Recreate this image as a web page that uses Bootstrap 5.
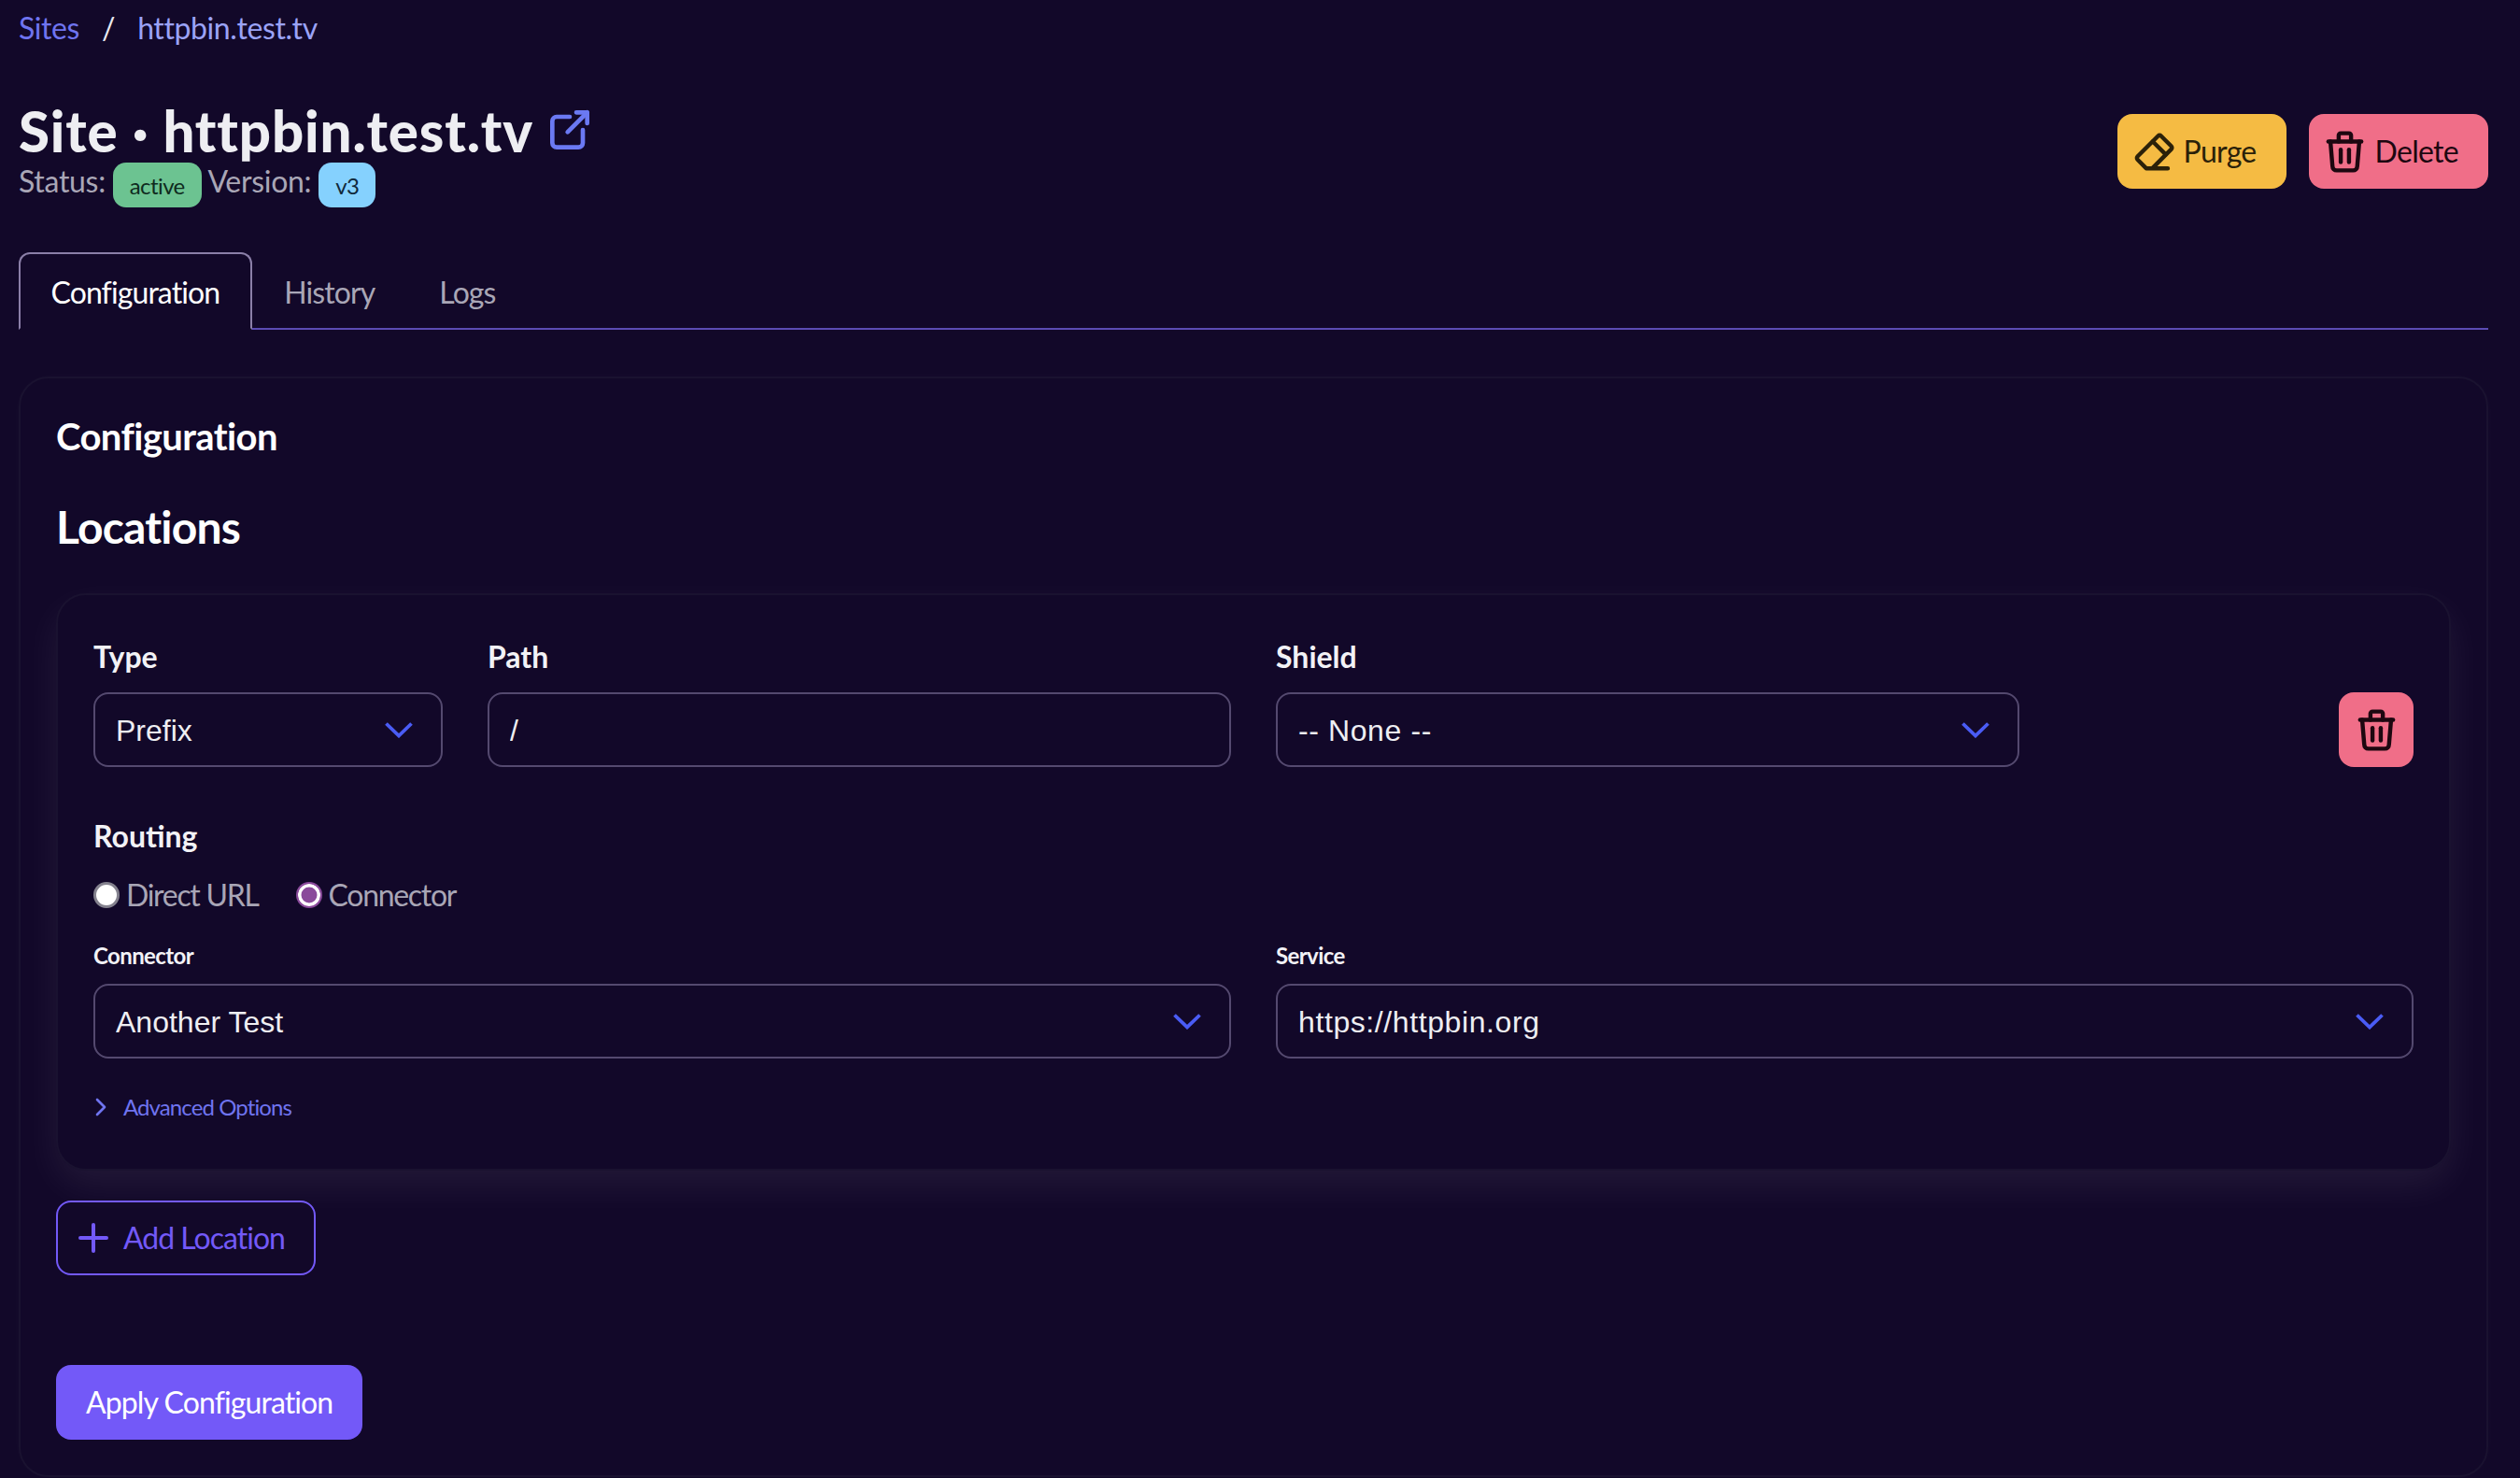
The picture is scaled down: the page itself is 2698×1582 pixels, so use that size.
<!DOCTYPE html>
<html lang="en" data-bs-theme="dark">
<head>
    <meta charset="utf-8">
    <title>Site - httpbin.test.tv</title>
    <link href="https://cdn.jsdelivr.net/npm/bootstrap@5.3.0/dist/css/bootstrap.min.css" rel="stylesheet">
    <style>
        html { font-size: 32px; }
        body {
            background: #120829; color: #eeeef2;
            font-family: "Lato", "Liberation Sans", sans-serif;
            --bs-border-width: 2px;
            line-height: 1.5;
            letter-spacing: -0.9px;
            overflow: hidden;
        }
        .page-wrap { padding: 6px 34px 0 20px; }
        a { text-decoration: none; }
        .crumbs { --bs-breadcrumb-margin-bottom: 0; --bs-breadcrumb-item-padding-x: 24px; --bs-breadcrumb-divider-color: #e8e8f0; --bs-breadcrumb-item-active-color: #9ba3f7; letter-spacing: -0.4px; }
        .crumbs a { color: #6f74f0; }
        .page-head { margin-top: 50px; height: 116px; }
        .site-title { font-size: 60px; font-weight: 900; line-height: 72px; margin: 0; color: #eeeef2; letter-spacing: .85px; }
        .site-title svg { width: 56px; height: 56px; margin-left: -3px; vertical-align: -4px; color: #6b79f3; }
        .status-row { color: #a9a6b6; line-height: 42px; margin-top: -3px; letter-spacing: -0.3px; }
        .state-pill { display: inline-block; height: 48px; line-height: 50px; padding: 0 18px; border-radius: 14px; font-size: 24px; color: #0f2b1e; font-weight: 400; vertical-align: -2px; letter-spacing: -0.6px; }
        .pill-green { background: #6cc391; }
        .pill-blue { background: #85d1fe; color: #10283a; }
        .head-actions { gap: 24px; padding-top: 18px; }
        .head-btn { height: 80px; border-radius: 16px; border: 0; padding: 0 32px 0 12px; display: flex; align-items: center; gap: 6px; font-size: 32px; letter-spacing: -0.7px; }
        .head-btn svg, .trash-btn svg { width: 53px; height: 53px; }
        .btn-purge { background: #f5bb43; color: #2b2109; }
        .btn-purge:hover { background: #f5bb43; color: #2b2109; }
        .btn-remove { background: #f06e88; color: #1d0710; }
        .btn-remove:hover { background: #f06e88; color: #1d0710; }
        .tabs-bar { margin-top: 50px; --bs-nav-tabs-border-color: #5b4bb3; --bs-nav-tabs-border-width: 2px; --bs-nav-tabs-border-radius: 12px; }
        .tabs-bar .nav-link { height: 83px; padding: 0 32.5px; line-height: 81px; color: #a9a6b6; border: 2px solid transparent; }
        .tabs-bar .nav-link.active { background: #120829; color: #fff; border-color: #8b7fa8 #8b7fa8 #120829; }
        .outer-panel { --bs-card-bg: #120829; --bs-card-border-color: #1a1230; --bs-card-border-radius: 32px; --bs-card-inner-border-radius: 30px; margin-top: 50px; height: 1178px; padding: 38px; box-shadow: 0 0 24px rgba(255,255,255,.02); }
        .panel-title { font-size: 40px; font-weight: 700; line-height: 48px; margin: 0; letter-spacing: -0.6px; }
        .panel-sub { font-size: 48px; font-weight: 700; line-height: 58px; margin: 44px 0 42px; letter-spacing: -0.8px; }
        .location-box { --bs-card-bg: #120829; --bs-card-border-color: #1a1230; --bs-card-border-radius: 32px; height: 618px; padding: 38px; box-shadow: 0 16px 40px rgba(255,255,255,.07); }
        .field-label { font-weight: 700; font-size: 32px; line-height: 48px; margin: 4px 0 14px; display: block; color: #f2f2f6; letter-spacing: 0; }
        .field-label-sm { font-size: 24px; font-weight: 700; line-height: 36px; margin: 0 0 12px; display: block; color: #f2f2f6; letter-spacing: -0.6px; }
        .form-select, .form-control {
            height: 80px; border-radius: 16px; background-color: transparent; border: 2px solid #54496f; letter-spacing: 0;
            color: #eeeef2; font-family: "Liberation Sans", sans-serif; font-size: 32px; padding: 2px 70px 0 22px;
        }
        .form-select {
            background-image: url("data:image/svg+xml,%3csvg xmlns='http://www.w3.org/2000/svg' viewBox='0 0 30 17'%3e%3cpath fill='none' stroke='%234a5cf5' stroke-width='3.8' d='M1.5 1.5 15 14.5 28.5 1.5'/%3e%3c/svg%3e");
            background-size: 30px 17px; background-position: right 30px center;
        }
        .wide-value { letter-spacing: .6px; }
        .trash-btn { width: 80px; height: 80px; border-radius: 16px; padding: 0; border: 0; display: flex; align-items: center; justify-content: center; }
        .route-title { font-weight: 700; line-height: 48px; margin: 50px 0 0; color: #f2f2f6; letter-spacing: 0; }
        .route-options { margin: 15px 0 23px; height: 48px; color: #a9a6b6; display: flex; align-items: center; gap: 40px; letter-spacing: -1.3px; }
        .route-options .form-check { margin: 0; padding: 0; min-height: 0; display: flex; align-items: center; gap: 7px; }
        .route-options .form-check-input { float: none; margin: 0; width: 28px; height: 28px; background-color: #fff; border: 3px solid #84828e; }
        .route-options .form-check-input:checked { background-color: #8a4a9b; background-image: none; border: 2.5px solid #8a4a9b; box-shadow: inset 0 0 0 3.5px #fff; }
        .adv-toggle { margin-top: 34px; display: flex; align-items: center; gap: 10px; font-size: 24px; color: #6f74f0; line-height: 36px; letter-spacing: -.9px; }
        .adv-toggle svg { width: 32px; height: 32px; margin-left: -8px; margin-right: -2px; }
        .add-btn { margin-top: 32px; height: 80px; display: inline-flex; align-items: center; gap: 8px; padding: 0 31px 0 14px; border: 2px solid #7359f8; border-radius: 16px; color: #7359f8; background: transparent; font-size: 32px; letter-spacing: -1px; }
        .add-btn svg { width: 48px; height: 48px; }
        .apply-btn { display: block; margin-top: 96px; height: 80px; padding: 0 32px; background: #7359f8; border: 0; border-radius: 16px; font-size: 32px; color: #fff; letter-spacing: -0.9px; }
        .apply-btn:hover { background: #7359f8; color: #fff; }
    </style>
</head>
<body>
<div class="page-wrap">
    <nav aria-label="breadcrumb">
        <ol class="breadcrumb crumbs">
            <li class="breadcrumb-item"><a href="#">Sites</a></li>
            <li class="breadcrumb-item active" aria-current="page">httpbin.test.tv</li>
        </ol>
    </nav>

    <div class="page-head d-flex justify-content-between align-items-start">
        <div>
            <h1 class="site-title">Site · httpbin.test.tv
                <svg viewBox="0 0 24 24" fill="none" stroke="currentColor" stroke-width="2" stroke-linecap="round" stroke-linejoin="round"><path d="M12 6h-6a2 2 0 0 0 -2 2v10a2 2 0 0 0 2 2h10a2 2 0 0 0 2 -2v-6"/><path d="M11 13l9 -9"/><path d="M15 4h5v5"/></svg>
            </h1>
            <div class="status-row">Status: <span class="state-pill pill-green">active</span> Version: <span class="state-pill pill-blue">v3</span></div>
        </div>
        <div class="d-flex head-actions">
            <button type="button" class="btn head-btn btn-purge">
                <svg viewBox="0 0 24 24" fill="none" stroke="currentColor" stroke-width="2" stroke-linecap="round" stroke-linejoin="round"><path d="M19 20h-10.5l-4.21 -4.3a1 1 0 0 1 0 -1.41l10 -10a1 1 0 0 1 1.41 0l5 5a1 1 0 0 1 0 1.41l-9.2 9.3"/><path d="M18 13.3l-6.3 -6.3"/></svg>
                Purge
            </button>
            <button type="button" class="btn head-btn btn-remove">
                <svg viewBox="0 0 24 24" fill="none" stroke="currentColor" stroke-width="2" stroke-linecap="round" stroke-linejoin="round"><path d="M4 7l16 0"/><path d="M10 11l0 6"/><path d="M14 11l0 6"/><path d="M5 7l1 12a2 2 0 0 0 2 2h8a2 2 0 0 0 2 -2l1 -12"/><path d="M9 7v-3a1 1 0 0 1 1 -1h4a1 1 0 0 1 1 1v3"/></svg>
                Delete
            </button>
        </div>
    </div>

    <ul class="nav nav-tabs tabs-bar">
        <li class="nav-item"><a class="nav-link active" href="#">Configuration</a></li>
        <li class="nav-item"><a class="nav-link" href="#">History</a></li>
        <li class="nav-item"><a class="nav-link" href="#">Logs</a></li>
    </ul>

    <div class="card outer-panel">
        <h3 class="panel-title">Configuration</h3>
        <h2 class="panel-sub">Locations</h2>

        <div class="card location-box">
            <div class="row">
                <div class="col-2">
                    <label class="field-label">Type</label>
                    <select class="form-select"><option>Prefix</option></select>
                </div>
                <div class="col-4">
                    <label class="field-label">Path</label>
                    <input type="text" class="form-control" value="/">
                </div>
                <div class="col-4">
                    <label class="field-label">Shield</label>
                    <select class="form-select wide-value"><option>-- None --</option></select>
                </div>
                <div class="col-2 d-flex justify-content-end align-items-end">
                    <button type="button" class="btn btn-remove trash-btn">
                        <svg viewBox="0 0 24 24" fill="none" stroke="currentColor" stroke-width="2" stroke-linecap="round" stroke-linejoin="round"><path d="M4 7l16 0"/><path d="M10 11l0 6"/><path d="M14 11l0 6"/><path d="M5 7l1 12a2 2 0 0 0 2 2h8a2 2 0 0 0 2 -2l1 -12"/><path d="M9 7v-3a1 1 0 0 1 1 -1h4a1 1 0 0 1 1 1v3"/></svg>
                    </button>
                </div>
            </div>

            <p class="route-title">Routing</p>
            <div class="route-options">
                <div class="form-check">
                    <input class="form-check-input" type="radio" name="routing" id="routeDirect">
                    <label class="form-check-label" for="routeDirect">Direct URL</label>
                </div>
                <div class="form-check">
                    <input class="form-check-input" type="radio" name="routing" id="routeConnector" checked>
                    <label class="form-check-label" for="routeConnector">Connector</label>
                </div>
            </div>

            <div class="row">
                <div class="col-6">
                    <label class="field-label-sm">Connector</label>
                    <select class="form-select"><option>Another Test</option></select>
                </div>
                <div class="col-6">
                    <label class="field-label-sm">Service</label>
                    <select class="form-select wide-value"><option>https://httpbin.org</option></select>
                </div>
            </div>

            <a href="#" class="adv-toggle">
                <svg viewBox="0 0 24 24" fill="none" stroke="currentColor" stroke-width="2" stroke-linecap="round" stroke-linejoin="round"><path d="M9 6l6 6l-6 6"/></svg>
                Advanced Options
            </a>
        </div>

        <div>
            <button type="button" class="btn add-btn">
                <svg viewBox="0 0 24 24" fill="none" stroke="currentColor" stroke-width="2" stroke-linecap="round" stroke-linejoin="round"><path d="M12 5l0 14"/><path d="M5 12l14 0"/></svg>
                Add Location
            </button>
        </div>
        <div>
            <button type="button" class="btn apply-btn">Apply Configuration</button>
        </div>
    </div>
</div>
<script src="https://cdn.jsdelivr.net/npm/bootstrap@5.3.0/dist/js/bootstrap.bundle.min.js"></script>
</body>
</html>
